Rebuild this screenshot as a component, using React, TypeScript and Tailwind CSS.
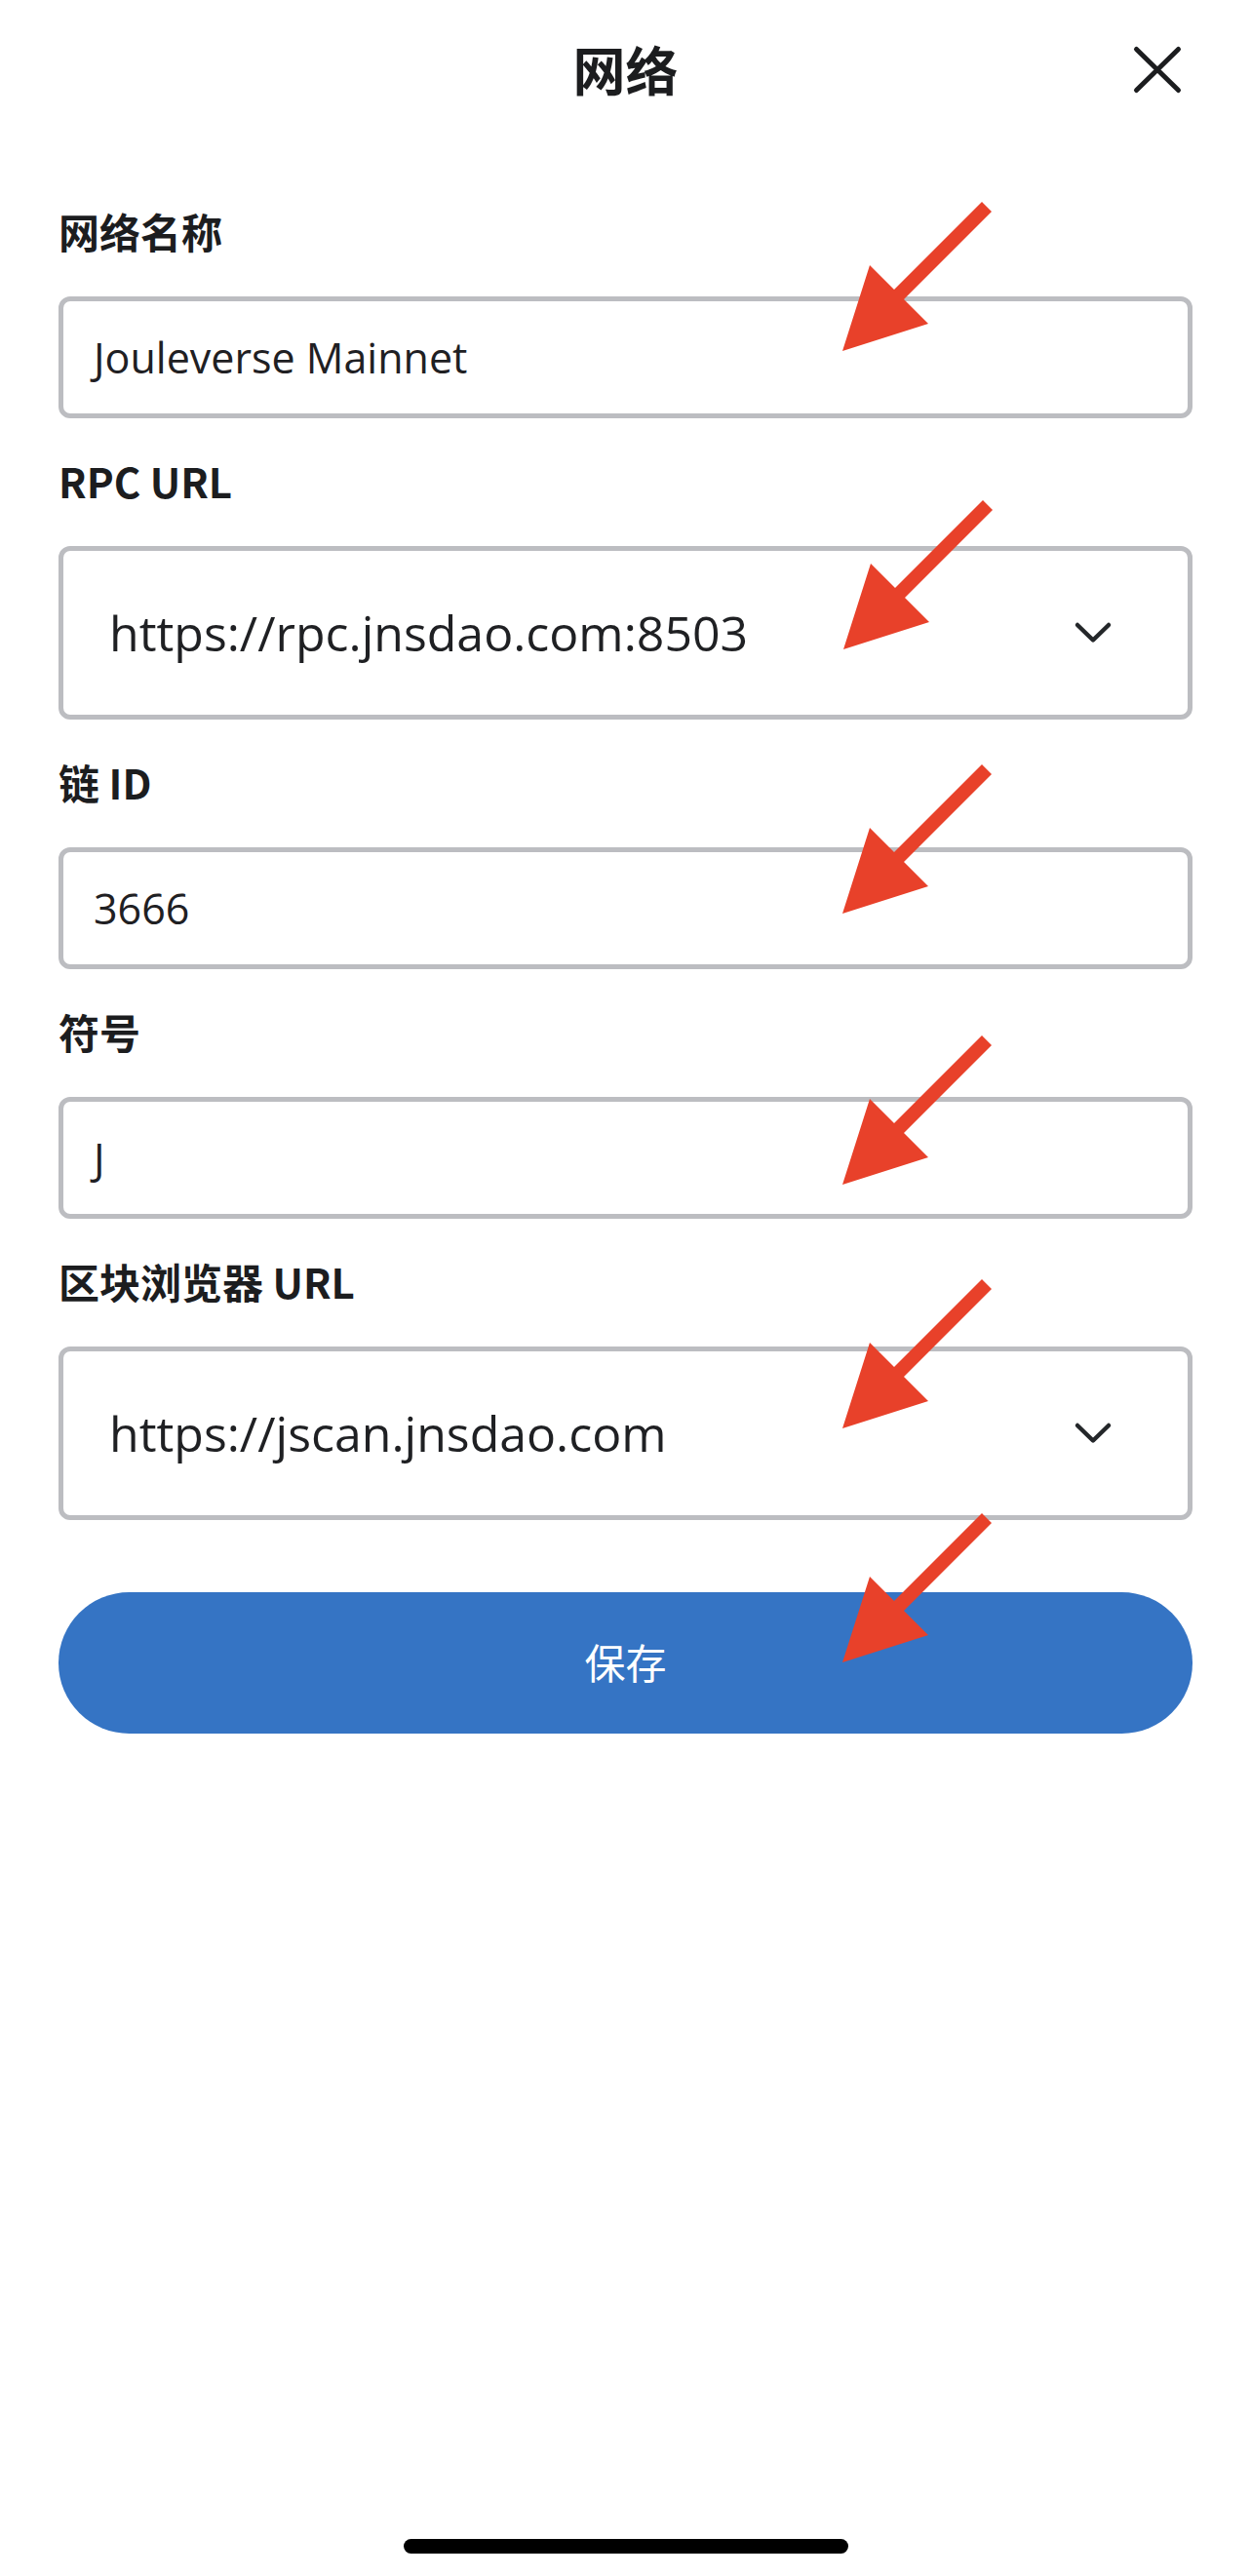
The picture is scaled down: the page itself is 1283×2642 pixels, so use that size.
import React from "react";

const cjk = "font-['Noto_Sans_CJK_SC','Noto_Sans',sans-serif]";
const latin = "font-['Open_Sans','Noto_Sans_CJK_SC',sans-serif]";

type Field = {
  label: string;
  value: string;
  select?: boolean;
};

const fields: Field[] = [
  { label: "网络名称", value: "Jouleverse Mainnet" },
  { label: "RPC URL", value: "https://rpc.jnsdao.com:8503", select: true },
  { label: "链 ID", value: "3666" },
  { label: "符号", value: "J" },
  { label: "区块浏览器 URL", value: "https://jscan.jnsdao.com", select: true },
];

// annotation arrows, tip positions on the screenshot
const arrowTips = [
  [864, 360],
  [865, 666],
  [864, 937],
  [864, 1215],
  [864, 1465],
  [864, 1705],
];

function Chevron() {
  return (
    <svg width="36" height="20" viewBox="0 0 36 20" className="overflow-visible shrink-0">
      <path d="M2 2 L18 17.5 L34 2" fill="none" stroke="#24272a" strokeWidth="4.5" strokeLinecap="round" strokeLinejoin="round" />
    </svg>
  );
}

function CloseIcon() {
  return (
    <svg width="48" height="47" viewBox="0 0 48 47" className="overflow-visible">
      <path d="M2.5 2.5 L45.5 44.5 M45.5 2.5 L2.5 44.5" fill="none" stroke="#1c1d1f" strokeWidth="5" strokeLinecap="round" />
    </svg>
  );
}

function FieldBox({ f }: { f: Field }) {
  if (f.select) {
    return (
      <div className="h-[178px] rounded-[12px] border-[5px] border-[#bcbdc1] bg-white flex items-center justify-between pl-[47px] pr-[79px]">
        <span className={`${latin} text-[50px] text-[#1f2023] leading-none`}>{f.value}</span>
        <Chevron />
      </div>
    );
  }
  return (
    <div className="h-[125px] rounded-[12px] border-[5px] border-[#bcbdc1] bg-white flex items-center pl-[31px]">
      <span className={`${latin} text-[43px] text-[#1f2023] leading-none`}>{f.value}</span>
    </div>
  );
}

export default function App() {
  return (
    <div className="relative w-full min-h-[2642px] bg-white flex flex-col overflow-hidden">
      {/* Header */}
      <div className="h-[142px] grid grid-cols-[1fr_auto_1fr] items-center">
        <div />
        <h1 className={`${cjk} text-[54px] font-semibold text-[#1c1d1f] leading-none`}>网络</h1>
        <div className="flex justify-end pr-[72px]">
          <CloseIcon />
        </div>
      </div>

      {/* Form */}
      <div className="mt-[69px] px-[60px] flex flex-col gap-[38px]">
        {fields.map((f) => (
          <div key={f.label} className="flex flex-col gap-[37px]">
            <div className={`${cjk} h-[56px] text-[42px] leading-[52px] font-semibold text-[#1c1d1f]`}>
              {f.label}
            </div>
            <FieldBox f={f} />
          </div>
        ))}

        <button className="mt-[36px] h-[145px] w-full rounded-full bg-[#3574c4] flex items-center justify-center">
          <span className={`${cjk} text-[42px] text-white leading-none -translate-y-[2px]`}>保存</span>
        </button>
      </div>

      {/* Home indicator */}
      <div className="mt-auto mb-[23px] self-center w-[456px] h-[15px] rounded-full bg-black" />

      {/* Red annotation arrows laid over the screenshot */}
      <svg className="absolute inset-0 pointer-events-none" width="1283" height="2642" viewBox="0 0 1283 2642">
        {arrowTips.map(([x, y], i) => (
          <polygon
            key={i}
            transform={`translate(${x} ${y})`}
            points="0,0 28,-88 53,-63 143,-153 153,-143 63,-53 88,-28"
            fill="#e8412a"
          />
        ))}
      </svg>
    </div>
  );
}
